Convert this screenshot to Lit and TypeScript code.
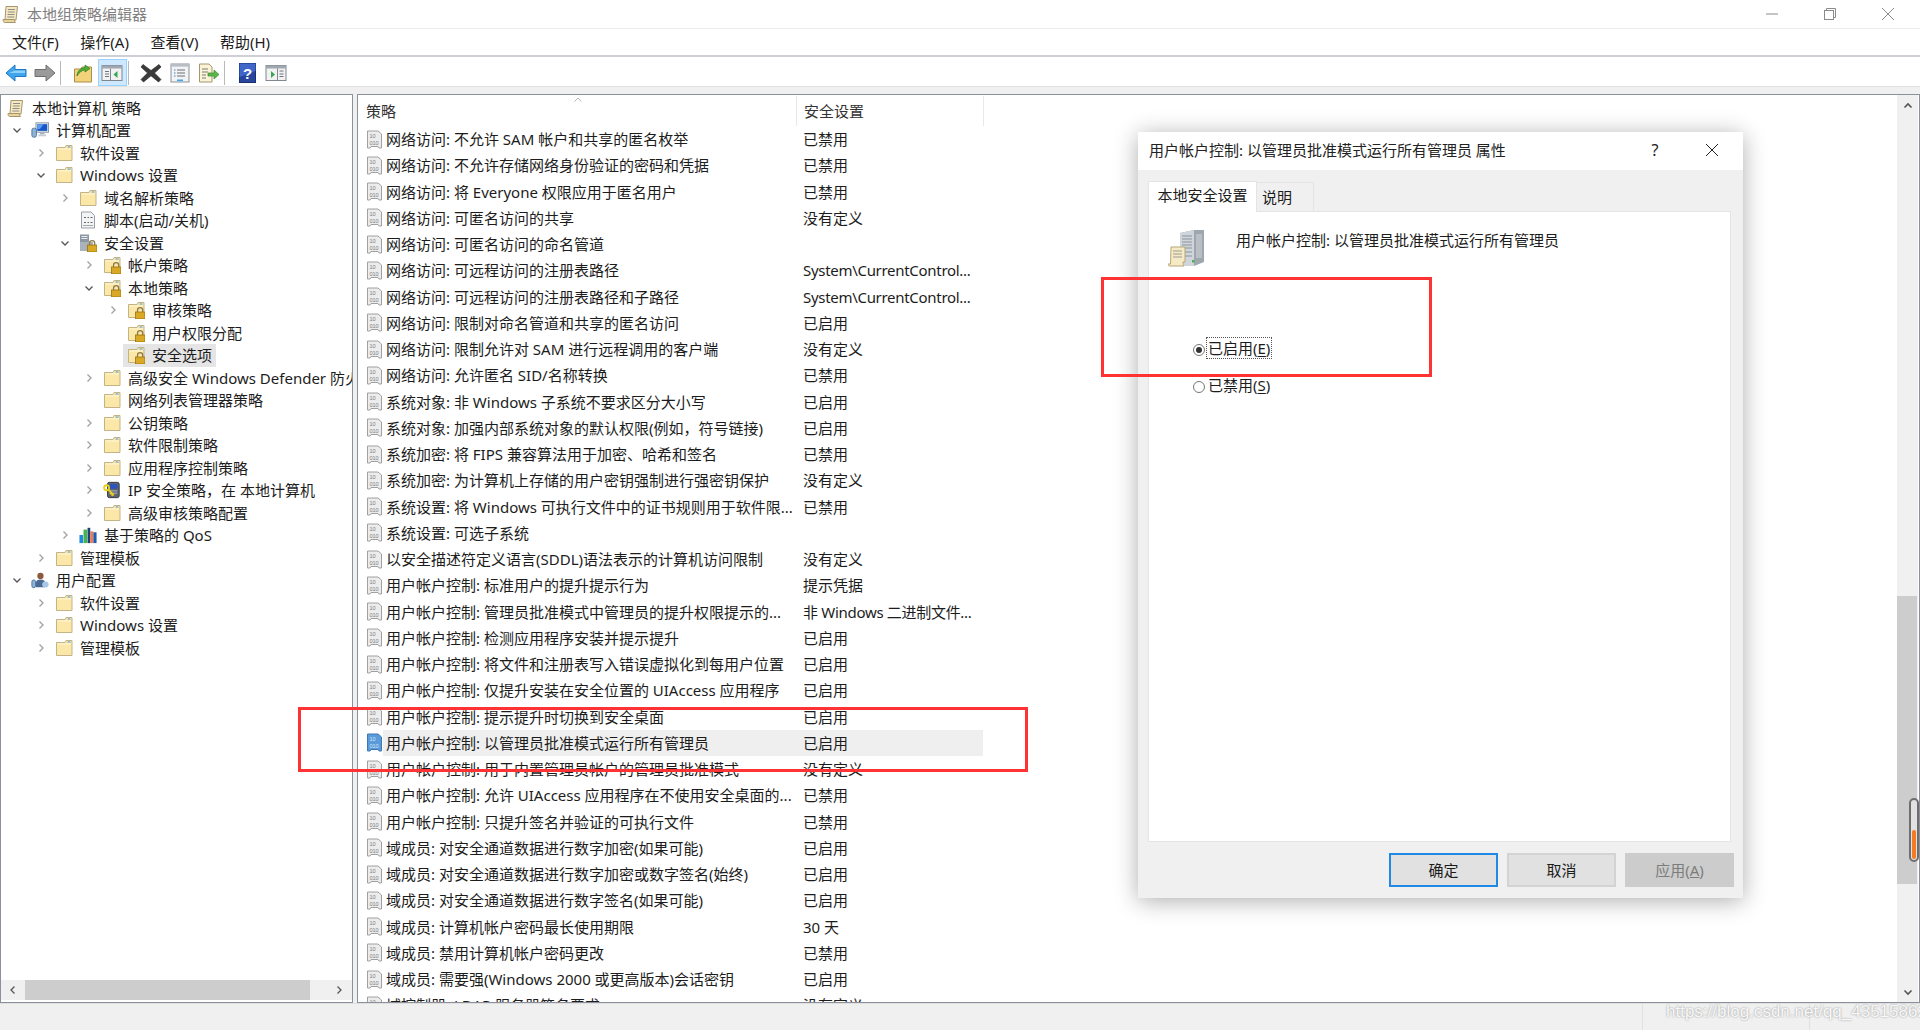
import { LitElement, html, css, svg } from "lit";
import { customElement } from "lit/decorators.js";

const S = (w: number, h: number, body: unknown) =>
  html`<svg width=${w} height=${h} viewBox="0 0 ${w} ${h}" style="display:block;flex:none">${body}</svg>`;
const T = (vw: number, body: unknown) =>
  html`<svg width="18" height="18" viewBox="0 0 ${vw} 18" preserveAspectRatio="xMidYMid meet" style="display:block;flex:none">${body}</svg>`;

const folderBody = svg`<path d="M1.5 3.5H10L11 1.5H17V16.5H1.5Z" fill="#fbe8a8" stroke="#c4b383"/><path d="M2.5 5H16" stroke="#fff6d8"/><path d="M12.5 3H15.5" stroke="#6fb5e8" stroke-width="1.4"/>`;
const lockBody = svg`<path d="M10.5 11V9.2a2.6 2.6 0 0 1 5.2 0V11" fill="none" stroke="#8b7a4a" stroke-width="1.3"/><rect x="8.5" y="11" width="9.5" height="7" fill="#d9a824" stroke="#9a7410" stroke-width=".8"/>`;
const scrollIcon = (w = 18) => html`<svg width=${w} height=${w} viewBox="0 0 18 18" style="display:block;flex:none"><path d="M4 1.5H15.5L14 15H3Z" fill="#f6e9bf" stroke="#a59670"/><path d="M1 14.5H12.5C12.5 16 13 17 13.5 17.5H2.5C1.5 17.5 1 16 1 14.5Z" fill="#e8d498" stroke="#a59670"/><path d="M6 4.5H13M5.8 7H12.8M5.5 9.5H12.5M5.3 12H12.3" stroke="#8c8c8c"/></svg>`;
const icons: Record<string, () => unknown> = {
  root: () => scrollIcon(18),
  folder: () => T(18, folderBody),
  lock: () => T(18, svg`${folderBody}${lockBody}`),
  computer: () => T(20, svg`<rect x="5.5" y="1" width="14" height="10.5" fill="#dfe4ea" stroke="#8894a2"/><rect x="7" y="2.5" width="11" height="7.5" fill="#1657c9"/><path d="M7 2.5H14L10 8H7Z" fill="#5d9df0"/><path d="M10 11.5H15V14H10Z" fill="#aab2bc"/><rect x="1" y="7" width="5" height="10" rx="2" fill="#8fb4d8" stroke="#4b6f96"/><rect x="8" y="14" width="9" height="2" fill="#c5ccd4"/>`),
  script: () => T(18, svg`<path d="M2.5 1H12L15.5 4.5V17H2.5Z" fill="#f3f4f6" stroke="#9a9ea6"/><path d="M5 6.5H7M8.5 6.5H10M11.5 6.5H13.5M5 11.5H7M8.5 11.5H10M11.5 11.5H13.5" stroke="#666"/><path d="M4 14.5H14" stroke="#aaa"/>`),
  seclock: () => T(18, svg`<rect x="1" y="0.5" width="9" height="16" fill="#8d97a3"/><path d="M2.5 2.5H8.5M2.5 4.5H8.5" stroke="#e6e9ed"/><rect x="1" y="8" width="13" height="9" fill="#a9b1bb"/>${lockBody}`),
  ipsec: () => T(20, svg`<rect x="5" y="0.5" width="13" height="17" rx="2" fill="#5d6470" stroke="#30343b"/><rect x="7" y="2.5" width="9" height="5" fill="#2a55c0"/><path d="M7 10H16M7 12.5H16" stroke="#b9bec6"/><circle cx="4" cy="6.5" r="2.8" fill="none" stroke="#e9cf1c" stroke-width="2"/><path d="M6 8.5L12 15M9.5 12L8 13.5M11 13.7L9.5 15.2" stroke="#e9cf1c" stroke-width="2"/>`),
  qos: () => T(20, svg`<rect x="0.5" y="9" width="4" height="9" fill="#1f8ae0"/><rect x="5" y="3" width="4" height="15" fill="#43b649"/><rect x="9.5" y="1" width="3" height="17" fill="#1d3f7a"/><rect x="12.5" y="5" width="3.5" height="13" fill="#ee7a55"/><rect x="16" y="6" width="3.5" height="12" fill="#1c5fb0"/>`),
  user: () => T(20, svg`<circle cx="10.5" cy="4.5" r="3.5" fill="#8a5a3a"/><path d="M5.5 17V12C5.5 9.5 7.5 8.5 10.5 8.5S15.5 9.5 15.5 12V17Z" fill="#4a6a94"/><ellipse cx="16" cy="14" rx="3.6" ry="3.4" fill="#a8c8e8"/><rect x="1" y="9" width="4" height="8.5" rx="1.8" fill="#8fb4d8" stroke="#4b6f96"/>`),
};
const policyIcon = (active: boolean) => {
  const paper = active ? "#5b9bd9" : "#ececec";
  const edge = active ? "#3b78b6" : "#a0a0a0";
  const ink = active ? "#cfe4f7" : "#808080";
  return html`<svg width="17" height="19" viewBox="0 0 17 19" style="display:block;flex:none"><path d="M1.5 1H12L15.5 4V18H13L12 16.5H5L4 18H1.5Z" fill=${paper} stroke=${edge}/><text x="3.5" y="8" font-size="5.6" font-family="Liberation Sans" fill=${ink}>10</text><text x="3.5" y="14.5" font-size="5.6" font-family="Liberation Sans" fill=${ink}>01</text><text x="9.5" y="14.5" font-size="5.6" font-family="Liberation Sans" fill=${ink}>0</text></svg>`;
};

const chevron = (dir: "r" | "d" | "l" | "u", color = "#9a9a9a", sw = 1.3) => {
  const d = { r: "M3.5 1.5L7 5L3.5 8.5", l: "M6.5 1.5L3 5L6.5 8.5", d: "M1.5 3.5L5 7L8.5 3.5", u: "M1.5 6.5L5 3L8.5 6.5" }[dir];
  return html`<svg width="10" height="10" viewBox="0 0 10 10" style="display:block"><path d=${d} fill="none" stroke=${color} stroke-width=${sw}/></svg>`;
};

type Node = [number, string, string, "r" | "d" | "", boolean?];
const tree: Node[] = [
  [0, "root", "本地计算机 策略", ""],
  [1, "computer", "计算机配置", "d"],
  [2, "folder", "软件设置", "r"],
  [2, "folder", "Windows 设置", "d"],
  [3, "folder", "域名解析策略", "r"],
  [3, "script", "脚本(启动/关机)", ""],
  [3, "seclock", "安全设置", "d"],
  [4, "lock", "帐户策略", "r"],
  [4, "lock", "本地策略", "d"],
  [5, "lock", "审核策略", "r"],
  [5, "lock", "用户权限分配", ""],
  [5, "lock", "安全选项", "", true],
  [4, "folder", "高级安全 Windows Defender 防火墙", "r"],
  [4, "folder", "网络列表管理器策略", ""],
  [4, "folder", "公钥策略", "r"],
  [4, "folder", "软件限制策略", "r"],
  [4, "folder", "应用程序控制策略", "r"],
  [4, "ipsec", "IP 安全策略，在 本地计算机", "r"],
  [4, "folder", "高级审核策略配置", "r"],
  [3, "qos", "基于策略的 QoS", "r"],
  [2, "folder", "管理模板", "r"],
  [1, "user", "用户配置", "d"],
  [2, "folder", "软件设置", "r"],
  [2, "folder", "Windows 设置", "r"],
  [2, "folder", "管理模板", "r"],
];

const rows: [string, string][] = [
  ["网络访问: 不允许 SAM 帐户和共享的匿名枚举", "已禁用"],
  ["网络访问: 不允许存储网络身份验证的密码和凭据", "已禁用"],
  ["网络访问: 将 Everyone 权限应用于匿名用户", "已禁用"],
  ["网络访问: 可匿名访问的共享", "没有定义"],
  ["网络访问: 可匿名访问的命名管道", ""],
  ["网络访问: 可远程访问的注册表路径", "System\\CurrentControl..."],
  ["网络访问: 可远程访问的注册表路径和子路径", "System\\CurrentControl..."],
  ["网络访问: 限制对命名管道和共享的匿名访问", "已启用"],
  ["网络访问: 限制允许对 SAM 进行远程调用的客户端", "没有定义"],
  ["网络访问: 允许匿名 SID/名称转换", "已禁用"],
  ["系统对象: 非 Windows 子系统不要求区分大小写", "已启用"],
  ["系统对象: 加强内部系统对象的默认权限(例如，符号链接)", "已启用"],
  ["系统加密: 将 FIPS 兼容算法用于加密、哈希和签名", "已禁用"],
  ["系统加密: 为计算机上存储的用户密钥强制进行强密钥保护", "没有定义"],
  ["系统设置: 将 Windows 可执行文件中的证书规则用于软件限...", "已禁用"],
  ["系统设置: 可选子系统", ""],
  ["以安全描述符定义语言(SDDL)语法表示的计算机访问限制", "没有定义"],
  ["用户帐户控制: 标准用户的提升提示行为", "提示凭据"],
  ["用户帐户控制: 管理员批准模式中管理员的提升权限提示的...", "非 Windows 二进制文件..."],
  ["用户帐户控制: 检测应用程序安装并提示提升", "已启用"],
  ["用户帐户控制: 将文件和注册表写入错误虚拟化到每用户位置", "已启用"],
  ["用户帐户控制: 仅提升安装在安全位置的 UIAccess 应用程序", "已启用"],
  ["用户帐户控制: 提示提升时切换到安全桌面", "已启用"],
  ["用户帐户控制: 以管理员批准模式运行所有管理员", "已启用"],
  ["用户帐户控制: 用于内置管理员帐户的管理员批准模式", "没有定义"],
  ["用户帐户控制: 允许 UIAccess 应用程序在不使用安全桌面的...", "已禁用"],
  ["用户帐户控制: 只提升签名并验证的可执行文件", "已禁用"],
  ["域成员: 对安全通道数据进行数字加密(如果可能)", "已启用"],
  ["域成员: 对安全通道数据进行数字加密或数字签名(始终)", "已启用"],
  ["域成员: 对安全通道数据进行数字签名(如果可能)", "已启用"],
  ["域成员: 计算机帐户密码最长使用期限", "30 天"],
  ["域成员: 禁用计算机帐户密码更改", "已禁用"],
  ["域成员: 需要强(Windows 2000 或更高版本)会话密钥", "已启用"],
  ["域控制器: LDAP 服务器签名要求", "没有定义"],
];

const toolbarIcons = {
  back: S(22, 18, svg`<path d="M1 9L10 1V5.5H21V12.5H10V17Z" fill="#3fa6ee" stroke="#1f78c4"/><path d="M10 6.5H20V9H4" fill="#8fd0fa"/>`),
  fwd: S(22, 18, svg`<path d="M21 9L12 1V5.5H1V12.5H12V17Z" fill="#9a9a9a" stroke="#6e6e6e"/>`),
  up: S(20, 20, svg`<path d="M1.5 6H8L9 4H18.5V19H1.5Z" fill="#f2d27a" stroke="#a98f4a"/><path d="M4 13C4 8 8 5 12 4.5V2L17 5.5L12 9V6.8C9 7.2 6 9.5 4 13Z" fill="#4fae35" stroke="#2f7d1e" stroke-width=".7"/>`),
  tree: S(22, 18, svg`<rect x="1" y="1.5" width="20" height="15" fill="#f2f2f2" stroke="#7f8791"/><rect x="1" y="1.5" width="20" height="3" fill="#9fa7b1"/><path d="M4 7.5H8M4 10H8M4 12.5H8" stroke="#6d7782"/><path d="M9.5 4.5V16.5" stroke="#7f8791"/><path d="M16.5 7V14L12.5 10.5Z" fill="#34a853"/>`),
  del: S(22, 20, svg`<path d="M3 1.5L11 7.5L19 1.5L21 4L14.5 10L21 16.5L18.5 19L11 12.8L3.5 19L1 16.5L7.5 10L1 4Z" fill="#3b3b3b" stroke="#1c1c1c" stroke-width=".6"/>`),
  prop: S(20, 20, svg`<rect x="1" y="1" width="18" height="18" fill="#f2f3f5" stroke="#8b9097"/><rect x="1" y="1" width="18" height="2.6" fill="#b8bdc4"/><path d="M7 7H15M7 10H15M7 13H15" stroke="#6b7075"/><path d="M4 7H5.5M4 10H5.5M4 13H5.5" stroke="#3d7ec0"/><rect x="7" y="16.5" width="6" height="1.6" fill="#42a5e8"/>`),
  exp: S(22, 20, svg`<path d="M1.5 1H11L14 4V19H1.5Z" fill="#fbf3d6" stroke="#a59670"/><path d="M4 6H10M4 9H10M4 12H8M4 15H8" stroke="#7d7d7d"/><path d="M10 10H16V7L21 11.5L16 16V13H10Z" fill="#59b84a" stroke="#3a8a2e" stroke-width=".7"/>`),
  help: S(17, 20, svg`<rect x=".5" y=".5" width="16" height="19" fill="#27459c" stroke="#1a2f70"/><path d="M.5 .5H16.5V8L.5 14Z" fill="#3f66c8"/><text x="8.5" y="15.5" text-anchor="middle" font-size="15" font-weight="700" font-family="Liberation Sans" fill="#fff">?</text>`),
  show: S(22, 18, svg`<rect x="1" y="1.5" width="20" height="15" fill="#f2f2f2" stroke="#7f8791"/><rect x="1" y="1.5" width="20" height="3" fill="#9fa7b1"/><path d="M14.5 7H18.5M14.5 10H18.5M14.5 12.5H18.5" stroke="#6d7782"/><path d="M12.5 4.5V16.5" stroke="#7f8791"/><path d="M6 7V14L10 10.5Z" fill="#34a853"/>`),
};

@customElement("app-root")
export class AppRoot extends LitElement {
  static styles = css`
    :host { display: block; width: 1920px; height: 1030px; position: relative; overflow: hidden; background: #fff; color: #1c1c1c;
      font: 15px/20px "Noto Sans", "Noto Sans CJK SC", sans-serif; }
    .app { height: 1030px; display: flex; flex-direction: column; }
    .title { height: 28px; flex: none; display: flex; align-items: center; padding: 0 26px 0 2px; gap: 7px; border-bottom: 1px solid #ececec; color: #808080; }
    .title .grow { flex: 1; }
    .winbtns { display: flex; gap: 46px; align-items: center; }
    .menu { height: 26px; flex: none; display: flex; align-items: center; padding-left: 12px; gap: 21.5px; border-bottom: 2px solid #cfcfd6; }
    .toolbar { height: 27px; flex: none; display: flex; align-items: center; padding: 2px 0 0 1px; }
    .tb { width: 29px; height: 27px; display: flex; align-items: center; justify-content: center; box-sizing: border-box; }
    .tb.on { background: #cde8ff; border: 1px solid #99d1ff; }
    .sep { width: 1px; height: 24px; background: #b9b9b9; margin: 0 7.5px 0 1px; }
    .main { flex: 1; min-height: 0; display: flex; gap: 4px; background: #f0f0f0; border-top: 1px solid #e2e2e2; padding-top: 7px; }
    .pane { background: #fff; border: 1px solid #8b909a; border-bottom-width: 1px; box-sizing: border-box; display: flex; min-height: 0; }
    .left { width: 353px; flex: none; flex-direction: column; }
    .tree { flex: 1; overflow: hidden; padding-top: 1.5px; }
    .tnode { height: 22.5px; display: flex; align-items: center; white-space: nowrap; box-sizing: border-box; }
    .arrow { width: 12px; flex: none; display: flex; justify-content: center; }
    .node { display: flex; align-items: center; gap: 7px; height: 23px; padding: 0 4px; margin-left: 4px; }
    .node.root { margin-left: 2px; gap: 7px; }
    .node.sel { background: #e5e5e5; }
    .hbar { height: 20px; flex: none; background: #f0f0f0; display: flex; align-items: center; margin-bottom: 2px; }
    .hbar .cap { width: 24px; flex: none; display: flex; justify-content: center; }
    .hbar .thumb { width: 285px; height: 100%; background: #cdcdcd; }
    .hbar .rest { flex: 1; display: flex; justify-content: flex-end; padding-right: 8px; }
    .right { flex: 1; min-width: 0; }
    .listwrap { flex: 1; min-width: 0; overflow: hidden; }
    .header { height: 31px; padding-top: 1px; box-sizing: border-box; display: flex; position: relative; color: #333; }
    .hcol { display: flex; align-items: center; box-sizing: border-box; border-right: 1px solid #e8e8e8; }
    .hcol.a { width: 439px; padding-left: 8px; }
    .hcol.b { width: 187px; padding-left: 7px; }
    .caret { position: absolute; left: 215px; top: 0; }
    .row { height: 26.25px; display: flex; align-items: center; padding-left: 8px; white-space: nowrap; }
    .row .ic { width: 17px; flex: none; }
    .cells { display: flex; align-items: center; height: 26px; width: 600px; flex: none; }
    .row.hl .cells { background: #efefef; }
    .name { width: 420px; flex: none; padding-left: 3px; box-sizing: border-box; overflow: hidden; }
    .tight { letter-spacing: -0.3px; }
    .vbar { width: 21px; flex: none; margin-right: 1px; background: #f0f0f0; display: flex; flex-direction: column; position: relative; }
    .vcap { height: 21px; flex: none; display: flex; align-items: center; justify-content: center; }
    .vthumb { position: absolute; left: 0; width: 20px; top: 501px; height: 288px; background: #cdcdcd; }
    .vspace { flex: 1; }
    .marker { position: absolute; left: 12px; top: 703px; width: 10px; height: 64px; box-sizing: border-box; border: 2px solid #6e6e6e; border-radius: 5px; background: #e2e2e2; }
    .marker i { position: absolute; left: 1px; bottom: 1px; width: 4px; height: 29px; background: #f47a23; border-radius: 2px; }
    .status { height: 27px; flex: none; background: #f0f0f0; border-top: 1px solid #dfdfdf; box-sizing: border-box; display: flex; justify-content: flex-end; }
    .scell { width: 166px; border-left: 1px solid #e0e0e0; }
    .scell.l { width: 110px; }
    .dialog { position: absolute; left: 1138px; top: 132px; width: 605px; height: 766px; background: #f0f0f0; box-shadow: 0 3px 22px rgba(0,0,0,.32); display: flex; flex-direction: column; box-sizing: border-box; }
    .dtitle { height: 38px; flex: none; background: #fff; display: flex; align-items: center; padding: 0 0 2px 11px; box-sizing: border-box; color: #222; }
    .dtitle .grow { flex: 1; }
    .dq { width: 20px; text-align: center; margin-right: 41px; font-size: 16px; }
    .dx { margin-right: 25px; }
    .tabs { display: flex; margin: 11px 0 0 10px; height: 30px; align-items: flex-end; flex: none; }
    .tab { box-sizing: border-box; display: flex; align-items: center; justify-content: center; }
    .tab.on { width: 109px; height: 31px; background: #fff; border: 1px solid #e4e4e4; border-bottom: none; position: relative; z-index: 1; margin-bottom: -1px; padding-bottom: 4px; }
    .tab.off { width: 57px; height: 29px; background: #f0f0f0; border: 1px solid #e4e4e4; border-bottom: none; border-left: none; justify-content: flex-start; padding-left: 5px; }
    .panel { flex: 1; min-height: 0; margin: 0 12px 0 10px; background: #fff; border: 1px solid #e4e4e4; padding: 18px 19px; box-sizing: border-box; }
    .phead { display: flex; gap: 32px; height: 38px; }
    .phead span { margin-top: -1px; line-height: 22px; }
    .radios { margin: 69px 0 0 25px; display: flex; flex-direction: column; gap: 15px; }
    .radio { display: flex; align-items: center; gap: 1px; height: 22px; }
    .rb { width: 12px; height: 12px; flex: none; box-sizing: border-box; border: 1px solid #777; border-radius: 50%; background: #fff; display: flex; align-items: center; justify-content: center; margin-top: 3px; }
    .rb i { width: 6px; height: 6px; border-radius: 50%; background: #333; }
    .lab { padding: 0 1px; border: 1px dotted transparent; line-height: 20px; }
    .lab.focus { border-color: #555; }
    .lab u { text-underline-offset: 2px; }
    .foot { flex: none; height: 56px; display: flex; justify-content: flex-end; gap: 9px; padding: 11px 9px 11px 0; box-sizing: border-box; }
    .btn { width: 109px; height: 34px; box-sizing: border-box; background: #e1e1e1; border: 2px solid #d3d3d3; display: flex; align-items: center; justify-content: center; }
    .btn.def { border-color: #1f8ae6; }
    .btn.dis { background: #cccccc; border-color: #cccccc; color: #7c7c7c; }
    .red { position: absolute; border: 3px solid #ff3333; box-sizing: border-box; pointer-events: none; }
    .red.a { left: 298px; top: 707px; width: 730px; height: 65px; }
    .red.b { left: 1101px; top: 277px; width: 331px; height: 100px; }
    .wm { position: absolute; left: 1666px; top: 1001px; color: #f8f8f8; text-shadow: 0 0 2px #8a8a8a; font: 17px/22px "Liberation Sans", sans-serif; white-space: nowrap; }
  `;

  private treeRow(n: Node) {
    const [lvl, icon, label, arrow, sel] = n;
    if (lvl === 0) {
      return html`<div class="tnode"><div class="node root">${icons[icon]()}<span>${label}</span></div></div>`;
    }
    const pad = 10 + (lvl - 1) * 24;
    return html`<div class="tnode" style="padding-left:${pad}px">
      <span class="arrow">${arrow ? chevron(arrow, arrow === "d" ? "#555" : "#a0a0a0") : ""}</span>
      <div class="node ${sel ? "sel" : ""}">${icons[icon]()}<span>${label}</span></div>
    </div>`;
  }

  render() {
    return html`
      <div class="app">
        <div class="title">
          ${scrollIcon(18)}<span>本地组策略编辑器</span><span class="grow"></span>
          <div class="winbtns">
            ${S(12, 12, svg`<path d="M0 6H12" stroke="#8a8a8a"/>`)}
            ${S(12, 12, svg`<rect x=".5" y="2.5" width="9" height="9" fill="none" stroke="#8a8a8a"/><path d="M2.5 2.5V.5H11.5V9.5H9.5" fill="none" stroke="#8a8a8a"/>`)}
            ${S(12, 12, svg`<path d="M0 0L12 12M12 0L0 12" stroke="#8a8a8a"/>`)}
          </div>
        </div>
        <div class="menu"><span>文件(F)</span><span>操作(A)</span><span>查看(V)</span><span>帮助(H)</span></div>
        <div class="toolbar">
          <div class="tb">${toolbarIcons.back}</div><div class="tb">${toolbarIcons.fwd}</div><div class="sep"></div>
          <div class="tb">${toolbarIcons.up}</div><div class="tb on">${toolbarIcons.tree}</div><div class="sep"></div>
          <div class="tb">${toolbarIcons.del}</div><div class="tb">${toolbarIcons.prop}</div><div class="tb">${toolbarIcons.exp}</div><div class="sep"></div>
          <div class="tb">${toolbarIcons.help}</div><div class="tb">${toolbarIcons.show}</div>
        </div>
        <div class="main">
          <div class="pane left">
            <div class="tree">${tree.map((n) => this.treeRow(n))}</div>
            <div class="hbar">
              <span class="cap">${chevron("l", "#555")}</span><span class="thumb"></span>
              <span class="rest">${chevron("r", "#555")}</span>
            </div>
          </div>
          <div class="pane right">
            <div class="listwrap">
              <div class="header">
                <div class="hcol a">策略</div><div class="hcol b">安全设置</div>
                <span class="caret">${chevron("u", "#b5b5b5", 1)}</span>
              </div>
              ${rows.map(
                ([a, b], i) => html`<div class="row ${i === 23 ? "hl" : ""}">
                  <span class="ic">${policyIcon(i === 23)}</span>
                  <div class="cells"><span class="name">${a}</span><span class=${/^System|^非/.test(b) ? "tight" : ""}>${b}</span></div>
                </div>`
              )}
            </div>
            <div class="vbar">
              <div class="vcap">${chevron("u", "#555", 1.6)}</div>
              <div class="vspace"></div>
              <div class="vcap">${chevron("d", "#555", 1.6)}</div>
              <div class="vthumb"></div>
              <div class="marker"><i></i></div>
            </div>
          </div>
        </div>
        <div class="status"><div class="scell"></div><div class="scell l"></div></div>
      </div>

      <div class="dialog">
        <div class="dtitle">
          <span>用户帐户控制: 以管理员批准模式运行所有管理员 属性</span><span class="grow"></span>
          <span class="dq">?</span>
          <span class="dx">${S(12, 12, svg`<path d="M0 0L12 12M12 0L0 12" stroke="#222"/>`)}</span>
        </div>
        <div class="tabs"><div class="tab on">本地安全设置</div><div class="tab off">说明</div></div>
        <div class="panel">
          <div class="phead">
            ${S(36, 38, svg`<path d="M12 3L26 0H36V32L26 36H12Z" fill="#9ea6ae"/><path d="M12 3L26 0V36H12Z" fill="#cfd5da"/><path d="M14 6H24M14 9H24M14 12H24M14 15H24M14 18H24M14 22H24M14 26H24" stroke="#8b949c"/><path d="M28 4H34V28H28Z" fill="#b9bfc5"/><rect x="24" y="30" width="2.5" height="2.5" fill="#47b04a"/><path d="M3 17H17V32H15C15 34 15.5 35 16 36H2C0.7 36 0 35 0 34H2.5Z" fill="#f6eac4" stroke="#b7a678"/><path d="M5 21H14M5 24H14M5 27H14" stroke="#9a9a9a"/>`)}
            <span>用户帐户控制: 以管理员批准模式运行所有管理员</span>
          </div>
          <div class="radios">
            <div class="radio"><span class="rb"><i></i></span><span class="lab focus">已启用(<u>E</u>)</span></div>
            <div class="radio"><span class="rb"></span><span class="lab">已禁用(<u>S</u>)</span></div>
          </div>
        </div>
        <div class="foot">
          <div class="btn def">确定</div><div class="btn">取消</div><div class="btn dis">应用(<u>A</u>)</div>
        </div>
      </div>

      <div class="red a"></div>
      <div class="red b"></div>
      <div class="wm">https://blog.csdn.net/qq_43515862</div>
    `;
  }
}
